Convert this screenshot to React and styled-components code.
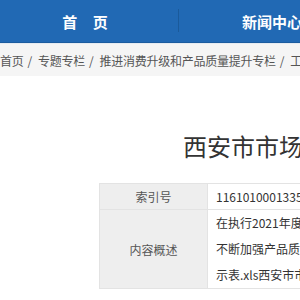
import React from 'react'
import styled, { createGlobalStyle } from 'styled-components'

const GlobalStyle = createGlobalStyle`
  html, body {
    margin: 0;
    padding: 0;
    background: #fff;
    overflow: hidden;
  }
  body {
    font-family: "Microsoft YaHei", "Noto Sans CJK SC", "Liberation Sans", sans-serif;
  }
  * { box-sizing: border-box; }
`

//스타일
const Page = styled.div`
  width: 300px;
  height: 300px;
  overflow: hidden;
`
const NavBar = styled.nav`
  height: 43px;
  background: #2169b4;
  border-bottom: 1px solid #1b5c9f;
  box-shadow: 0 1px 0 #e6ebf1;
  display: flex;
  margin-left: -8px;
  width: 600px;
`
const NavItem = styled.a`
  width: 186px;
  height: 42px;
  flex-shrink: 0;
  display: flex;
  align-items: center;
  justify-content: center;
  color: #fff;
  font-size: 15px;
  font-weight: bold;
  word-spacing: ${p => p.$spaced ? '12px' : '0'};
  text-decoration: none;
`
const Divider = styled.span`
  width: 1px;
  height: 23px;
  margin-top: 9px;
  background: #1a5a9b;
  flex-shrink: 0;
`
const Crumbs = styled.div`
  margin-top: 1px;
  height: 32px;
  background: #f5f5f5;
  display: flex;
  align-items: center;
  white-space: nowrap;
  font-size: 12px;
  letter-spacing: -0.25px;
  color: #555;
  padding-top: 1px;
  span {
    flex-shrink: 0;
  }
  i {
    font-style: normal;
    padding: 0 6px 0 4px;
    color: #555;
  }
`
const Title = styled.h1`
  margin: 58px 0 0 183px;
  font-size: 24px;
  line-height: 24px;
  font-weight: normal;
  color: #333;
  white-space: nowrap;
`
const InfoTable = styled.table`
  margin: 25px 0 0 99px;
  border-collapse: collapse;
  width: 400px;
  font-size: 12px;
  th, td {
    border: 1px solid #e3e3e3;
  }
  th {
    width: 108px;
    background: #eeeeee;
    color: #555;
    font-weight: normal;
    text-align: center;
  }
  td {
    color: #333;
    padding: 0 0 0 8px;
    white-space: nowrap;
  }
`
const Row = styled.tr`
  height: ${p => p.$h}px;
`
const Line = styled.div`
  line-height: 26px;
`

const App = () => {
  const crumbs = ['首页', '专题专栏', '推进消费升级和产品质量提升专栏', '工作动态']
  return (
    <Page>
      <GlobalStyle />
      <NavBar>
        <NavItem $spaced>首 页</NavItem>
        <Divider />
        <NavItem>新闻中心</NavItem>
      </NavBar>
      <Crumbs>
        {crumbs.map((c, i) => (
          <span key={i}>
            {i > 0 && <i>/</i>}
            {c}
            {i === 0 && ' '}
          </span>
        ))}
      </Crumbs>
      <Title>西安市市场监督管理局</Title>
      <InfoTable>
        <tbody>
          <Row $h={26}>
            <th>索引号</th>
            <td>11610100013351234X/2021-00123</td>
          </Row>
          <Row $h={79}>
            <th>内容概述</th>
            <td>
              <Line>在执行2021年度产品质量监督抽查计划</Line>
              <Line>不断加强产品质量提升工作</Line>
              <Line>示表.xls西安市市场监督管理局</Line>
            </td>
          </Row>
        </tbody>
      </InfoTable>
    </Page>
  )
}

export default App
